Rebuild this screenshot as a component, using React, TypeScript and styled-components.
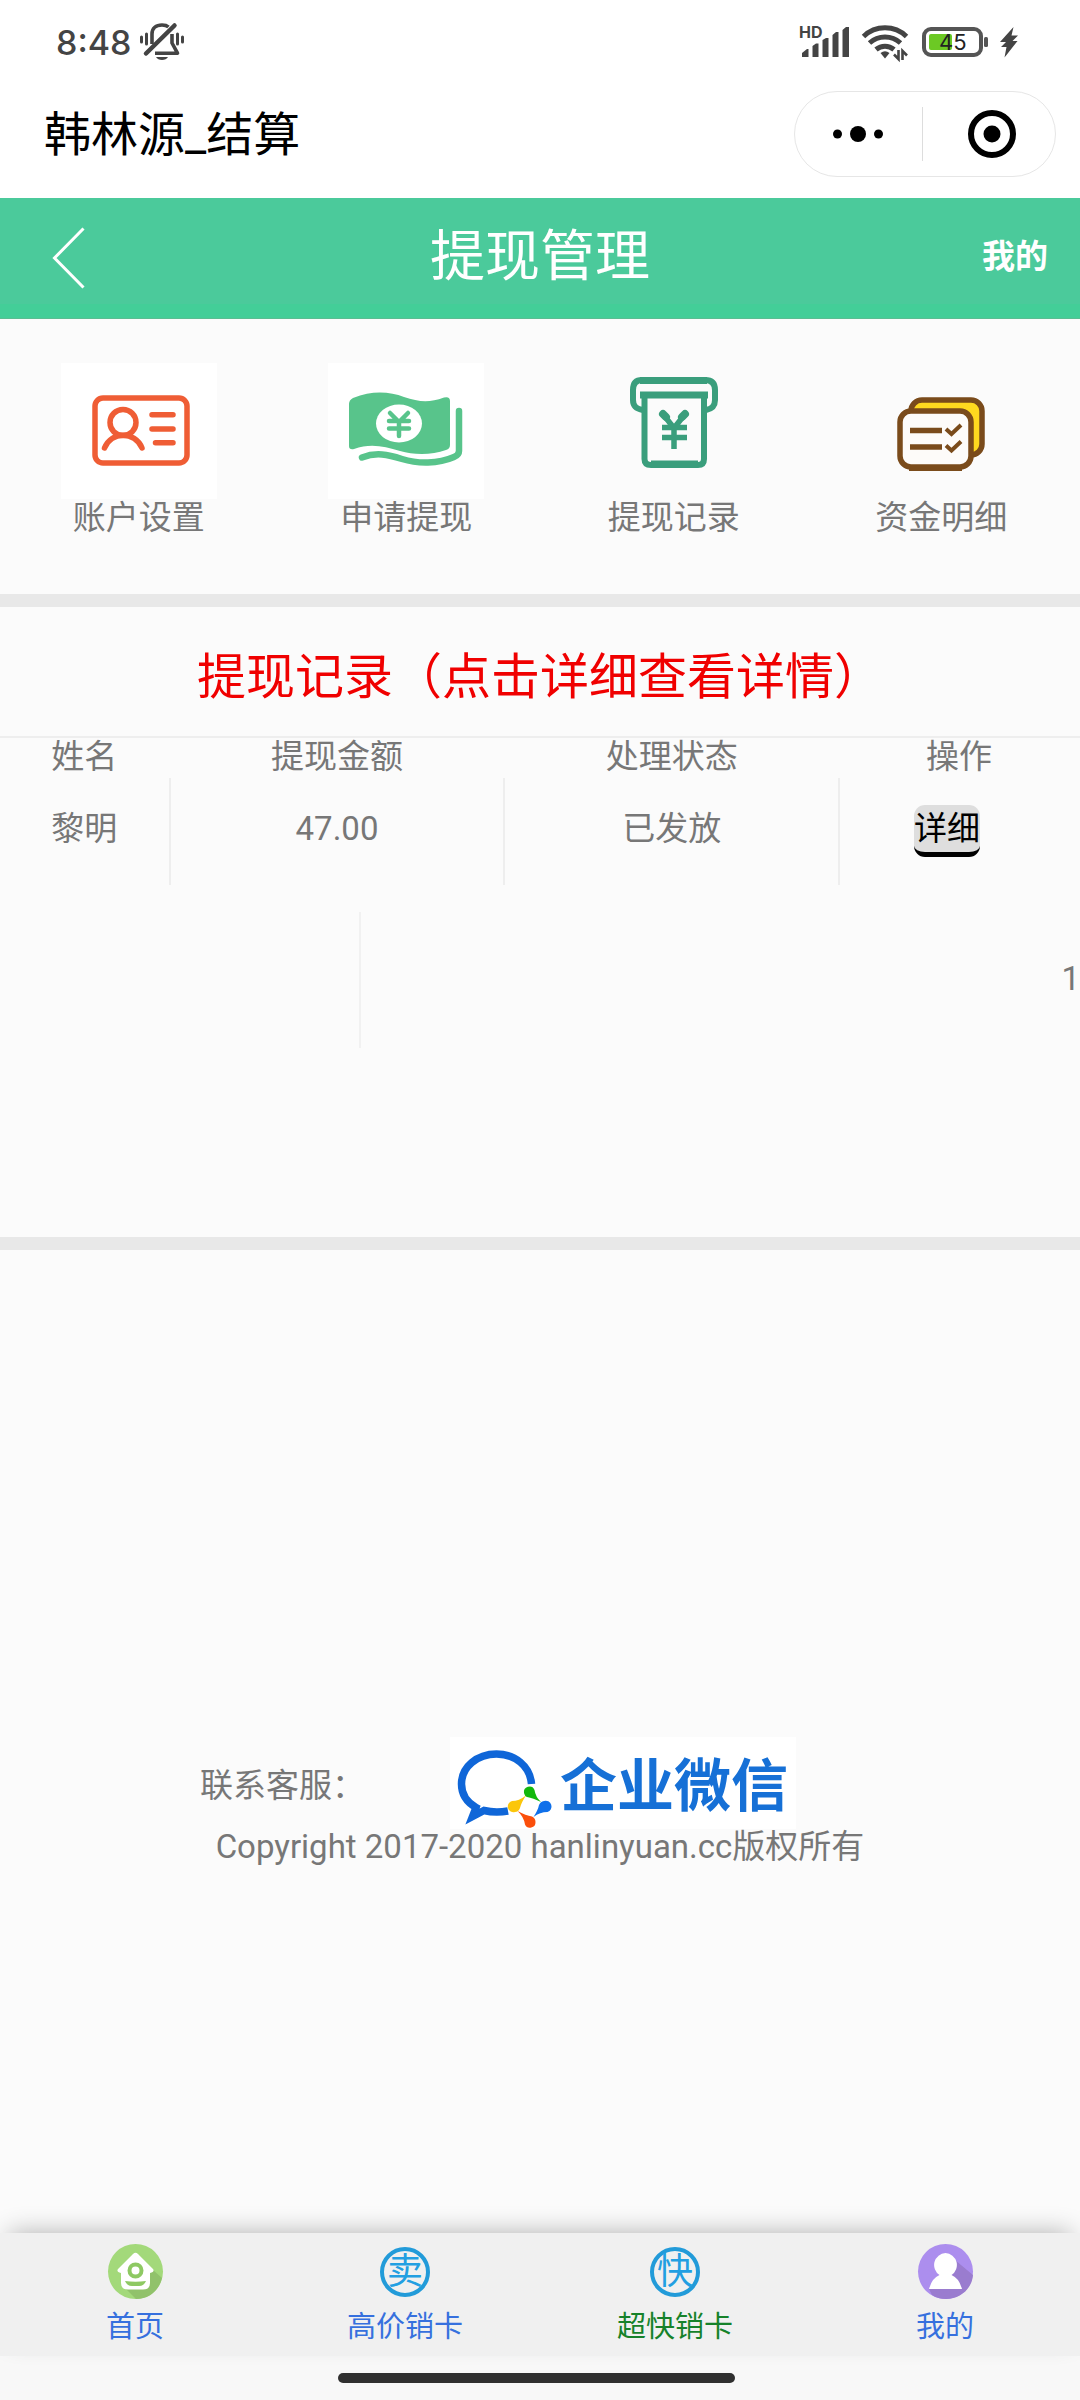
import React from "react";
import styled, { createGlobalStyle } from "styled-components";

const GlobalStyle = createGlobalStyle`
  *, *::before, *::after { box-sizing: border-box; }
  body {
    margin: 0;
    background: #fbfbfb;
    color: #777;
    font-family: Roboto, "Noto Sans CJK SC", sans-serif;
    font-size: 33px;
    line-height: 37px;
  }
  button { font: inherit; color: inherit; padding: 0; border: 0; background: none; cursor: pointer; }
  a { color: inherit; text-decoration: none; }
  svg { display: block; flex: none; overflow: visible; }
`;

const Page = styled.div`
  min-height: 100vh;
  display: flex;
  flex-direction: column;
`;

const StatusBar = styled.div`
  height: 84px;
  padding: 0 62px 0 56px;
  display: flex;
  align-items: center;
  justify-content: space-between;
  background: #fff;
  color: #444;
`;

const StatusGroup = styled.div<{ $gap: number }>`
  display: flex;
  align-items: center;
  gap: ${(p) => p.$gap}px;
`;

const Clock = styled.time`
  font-family: Inter, sans-serif;
  font-size: 34px;
  font-weight: 500;
`;

const TitleBar = styled.header`
  height: 114px;
  padding: 0 24px 14px 44px;
  display: flex;
  align-items: center;
  justify-content: space-between;
  background: #fff;
`;

const AppName = styled.div`
  padding-top: 2px;
  color: #000;
  font-size: 47px;
  line-height: 60px;
`;

const Capsule = styled.div`
  width: 262px;
  height: 86px;
  display: flex;
  align-items: center;
  border: 1px solid #e6e6e6;
  border-radius: 43px;
`;

const CapsuleButton = styled.button`
  flex: 1;
  height: 54px;
  display: flex;
  align-items: center;
  justify-content: center;

  & + & {
    padding-left: 6px;
    border-left: 1px solid #ddd;
  }
`;

const GreenBar = styled.div`
  height: 121px;
  padding: 0 32px;
  display: grid;
  grid-template-columns: 1fr auto 1fr;
  align-items: center;
  background: linear-gradient(#4bca9b 0 106px, #43ce98 106px);
  border-bottom: 1px solid #5bbd92;
  color: #fff;
`;

const BackButton = styled.button`
  justify-self: start;
  margin-left: 20px;
`;

const BarTitle = styled.h1`
  margin: 0;
  padding-bottom: 4px;
  font-size: 55px;
  font-weight: 400;
  line-height: 72px;
`;

const MineLink = styled.a`
  justify-self: end;
  padding-bottom: 4px;
  font-weight: 700;
`;

const Shortcuts = styled.nav`
  padding: 44px 5px 58px;
  display: grid;
  grid-template-columns: repeat(4, 1fr);
`;

const Shortcut = styled.a`
  display: flex;
  flex-direction: column;
  align-items: center;
`;

const Tile = styled.span<{ $filled: boolean }>`
  background: ${(p) => (p.$filled ? "#fff" : "transparent")};
`;

const Band = styled.div`
  height: 13px;
  background: #e8e8e8;
`;

const RecordsTitle = styled.h2`
  margin: 0;
  height: 131px;
  padding-top: 41px;
  border-bottom: 2px solid #eee;
  color: #f00000;
  font-size: 49px;
  font-weight: 400;
  line-height: 60px;
  text-align: center;
`;

const Records = styled.table`
  width: 100%;
  table-layout: fixed;
  border-collapse: separate;
  border-spacing: 0;
  text-align: center;
`;

const Column = styled.col<{ $width?: string }>`
  width: ${(p) => p.$width ?? "auto"};
`;

const HeadCell = styled.th`
  padding: 0 2px 3px 0;
  font-weight: 400;
`;

const Cell = styled.td`
  height: 107px;
  padding: 0 0 6px;
  border-right: 2px solid #eee;
`;

const ActionCell = styled.td`
  padding: 0 26px 2px 0;
`;

const DetailButton = styled.button`
  height: 52px;
  vertical-align: middle;
  border-bottom: 5px solid #000;
  border-radius: 11px;
  background: #dedede;
  color: #000;
  line-height: 47px;
`;

const Pager = styled.div`
  margin: 27px 0 189px;
  display: flex;
  align-items: center;
  justify-content: flex-end;
`;

const PagerSide = styled.div`
  flex: 0 0 361px;
  height: 136px;
  margin-right: auto;
  border-right: 2px solid #f1f1f1;
`;

const PageNumber = styled.span`
  padding-bottom: 3px;
`;

const Footer = styled.footer`
  flex: 1;
  padding: 487px 0 200px;
  text-align: center;
`;

const Contact = styled.div`
  height: 92px;
  padding-right: 84px;
  display: flex;
  align-items: center;
  justify-content: center;
  gap: 85px;
`;

const ContactLabel = styled.span`
  padding-top: 4px;
`;

const WorkLogo = styled.a`
  width: 346px;
  height: 92px;
  padding-left: 6px;
  display: flex;
  align-items: center;
  background: #fff;
  color: #1670d6;
`;

const WorkName = styled.span`
  padding-top: 7px;
  font-size: 57px;
  font-weight: 700;
  line-height: 80px;
`;

const Copyright = styled.p`
  margin: 0;
  line-height: 35px;
`;

const Dock = styled.div`
  position: sticky;
  bottom: 0;
  background: #f8f8f8;
`;

const Tabs = styled.nav`
  height: 123px;
  padding-top: 11px;
  display: grid;
  grid-template-columns: repeat(4, 1fr);
  background: #f0f0f0;
  box-shadow: 0 -9px 24px -9px rgba(0, 0, 0, 0.3);
`;

const Tab = styled.a<{ $color: string }>`
  display: flex;
  flex-direction: column;
  align-items: center;
  gap: 10px;
  color: ${(p) => p.$color};
  font-size: 29px;
`;

const TabIcon = styled.span`
  height: 55px;
  display: flex;
  align-items: center;
`;

const Coin = styled.span`
  width: 50px;
  height: 50px;
  display: flex;
  align-items: center;
  justify-content: center;
  border: 4px solid #229bd9;
  border-radius: 50%;
  color: #229fe2;
  font-size: 36px;
  line-height: 42px;
`;

const HomeIndicator = styled.div`
  height: 44px;
  padding: 17px 7px 0 0;

  &::after {
    content: "";
    display: block;
    width: 37%;
    height: 10px;
    margin: 0 auto;
    border-radius: 5px;
    background: #303030;
  }
`;

const BellOff = () => (
  <svg width="48" height="42" viewBox="0 0 48 42" fill="none" stroke="#444" strokeWidth="3.6">
    <path d="M14 23V13C14 7 18 4 24 4C27 4 29 4.600 30.500 6" />
    <path d="M36.500 4.500L8 32.500" strokeWidth="4.500" strokeLinecap="round" />
    <path d="M34 13V22L39.500 32.200H17" strokeLinejoin="round" />
    <path d="M18 36H30C28 40 20 40 18 36Z" fill="#444" stroke="none" />
    <path d="M3.500 16V21M8.500 13V23M39.500 13V23M44.500 16V21" strokeWidth="3" strokeLinecap="round" />
  </svg>
);

const Signal = () => (
  <svg width="50" height="34" viewBox="0 0 50 34" fill="#444">
    <text x="0" y="13" fontFamily="Inter, sans-serif" fontSize="16" fontWeight="700">HD</text>
    <path d="M3 32V28L8 24H9.500V32ZM13.500 32V21L17 18.500H19.500V32ZM23.500 32V15L27 13H29.500V32ZM33.500 32V10L37 7H39.500V32ZM43.500 32V5L47 2H50V32Z" />
  </svg>
);

const Wifi = () => (
  <svg width="48" height="38" viewBox="0 0 48 38" fill="none" stroke="#444" strokeWidth="5">
    <path d="M2.500 13.500A31 31 0 0 1 45.500 13.500" />
    <path d="M8.500 20A23 23 0 0 1 39.500 20" />
    <path d="M15 26.500A14 14 0 0 1 33 26.500" />
    <path d="M19.500 30Q24 26.500 28.500 30L24 35.500Z" fill="#444" stroke="none" />
    <path d="M37.500 27V36L33 31.500M41.500 37V28L46 32.500" strokeWidth="2.600" />
  </svg>
);

const Battery = () => (
  <svg width="67" height="32" viewBox="0 0 67 32">
    <rect x="3" y="3" width="57" height="26" rx="7" fill="#fff" stroke="#555" strokeWidth="4" />
    <rect x="8" y="8" width="23" height="16" rx="2" fill="#6cc924" />
    <rect x="63" y="11" width="4" height="10" rx="1.500" fill="#555" />
    <text x="18" y="24" fontFamily="Inter, sans-serif" fontSize="22" fontWeight="400" fill="#222">45</text>
  </svg>
);

const Bolt = () => (
  <svg width="18" height="31" viewBox="0 0 18 31" fill="#444">
    <path d="M13.500 0L0 15H6L1 20H6.500L4.500 30.500L17.500 14H12.500L18 8.500H11.500Z" />
  </svg>
);

const BackIcon = () => (
  <svg width="33" height="62" viewBox="0 0 33 62" fill="none" stroke="#fff" strokeWidth="3">
    <path d="M31.500 1.500L2.500 31L31.500 60.500" />
  </svg>
);

const AccountIcon = () => (
  <svg width="156" height="136" viewBox="0 0 156 136" fill="none" stroke="#ef5d35" strokeWidth="5.500" strokeLinecap="round">
    <rect x="34" y="35" width="92" height="65" rx="8" />
    <circle cx="62" cy="59.500" r="13" />
    <path d="M43.500 85C50 68 74 68 81 85M91 51.700H112M91 66H112M94.500 79.700H112" />
  </svg>
);

const CashIcon = () => (
  <svg width="156" height="136" viewBox="0 0 156 136" fill="none" strokeLinecap="round">
    <path
      d="M21 41Q21 37 25 35C45 27 62 29 76 34C91 39 101 40 116 34.500Q122 33 122 38V82Q122 86 118 87C104 92 86 92 72 88C56 83 42 80 26 86Q21 87 21 83Z"
      fill="#58c48b"
    />
    <ellipse cx="71" cy="60.500" rx="23" ry="19" fill="#fff" />
    <path d="M62 50L71 59L80 50M61 58H81M61 65.500H81M71 59V73" stroke="#58c48b" strokeWidth="4.500" />
    <path d="M131 48V88Q131 92 126 94C110 101 90 101 74 96C60 91.500 48 89 34 94.500" stroke="#58c48b" strokeWidth="6.500" />
  </svg>
);

const RecordIcon = () => (
  <svg width="156" height="136" viewBox="0 0 156 136" fill="none" stroke="#3a9e7c" strokeWidth="6">
    <path d="M47 47C41 46 37 44 37 37V27Q37 17 46 17H109Q119 17 119 27V37C119 44 115 46 110 47" />
    <path d="M48.500 32V96Q48.500 102 55 102H102Q108 102 108 96V32" />
    <path d="M44 32H112M55 101H102M44 17.500H111" strokeWidth="7" />
    <path d="M66 50L78 65L90 50M66 64.500H91M66 74.500H91M78 64V86" strokeWidth="5.500" />
    <path d="M67 51L70 54M89 51L86 54" strokeWidth="8" strokeLinecap="round" />
  </svg>
);

const FundsIcon = () => (
  <svg width="156" height="136" viewBox="0 0 156 136" fill="none" stroke="#7a4b1b" strokeWidth="5.500">
    <rect x="48" y="37" width="71" height="55" rx="11" fill="#ffd91f" />
    <rect x="37" y="48" width="71" height="56" rx="11" fill="#fdfbf9" />
    <path d="M46 105H99" strokeWidth="6" />
    <path d="M47 67.500H79M47 84H79" />
    <path d="M83 66L88.500 71L98 62M83 82.500L88.500 87.500L98 78.500" strokeWidth="4" />
  </svg>
);

const HomeIcon = () => (
  <svg width="55" height="55" viewBox="0 0 55 55">
    <circle cx="27.500" cy="27.500" r="27.500" fill="#a3d97a" />
    <path d="M45 26L54 34C51 46 42 55 28 55L17 44Z" fill="#91c26b" />
    <path d="M25 10Q27.500 7.500 30 10L45 25Q47 28 42 29V39Q42 45.500 35 45.500H20Q13 45.500 13 39V29Q8 28 10 25Z" fill="#fff" />
    <circle cx="27.500" cy="26.500" r="6" fill="none" stroke="#8ec963" strokeWidth="4" />
    <path d="M17 37Q27.500 38.500 38 37Q36 42 31 42H24Q19 42 17 37Z" fill="#8ec963" />
  </svg>
);

const PersonIcon = () => (
  <svg width="55" height="55" viewBox="0 0 55 55">
    <circle cx="27.500" cy="27.500" r="27.500" fill="#ac8eee" />
    <path d="M37 16L55 31C54 45 42 55 28 55Q20 55 14 51L11 45L34 32Z" fill="#9a7ccf" />
    <path d="M27.500 9A12 12 0 0 1 33.500 31Q41 34 44 45H11Q14 34 21.500 31A12 12 0 0 1 27.500 9Z" fill="#fff" />
  </svg>
);

const WorkBubble = () => (
  <svg width="104" height="92" viewBox="0 0 104 92">
    <path
      d="M75.500 47C74 29 59 17 40.500 17C21 17 5.500 30 5.500 47C5.500 57 10.500 65 20 70.500L16.500 79.500L28 73.500C36 75.500 44 75.500 52 74"
      fill="none"
      stroke="#0f66d8"
      strokeWidth="7.500"
    />
    <path d="M68 56A5.500 5.500 0 0 1 78.500 53Q79.500 60 85 65Q77 61 71 60Q68.500 59 68 56Z" fill="#12b80c" />
    <path d="M88 64A5.500 5.500 0 0 1 91.500 75Q84 75 77.500 80Q82 73 83 68Q84.500 64.500 88 64Z" fill="#0f70ea" />
    <path d="M79.500 85A5.500 5.500 0 0 1 69 87.500Q68 80 61.500 74Q70 78.500 76 79.500Q79.500 81 79.500 85Z" fill="#fb4f0b" />
    <path d="M59 75A5.500 5.500 0 0 1 56 64Q63 64 70 58.500Q65 66 64 71Q62.500 75 59 75Z" fill="#fbc60b" />
  </svg>
);

const shortcuts = [
  { label: "账户设置", icon: <AccountIcon />, filled: true },
  { label: "申请提现", icon: <CashIcon />, filled: true },
  { label: "提现记录", icon: <RecordIcon />, filled: false },
  { label: "资金明细", icon: <FundsIcon />, filled: false },
];

const records = [{ name: "黎明", amount: "47.00", status: "已发放" }];

const tabs = [
  { label: "首页", color: "#3670de", icon: <HomeIcon /> },
  { label: "高价销卡", color: "#3670de", icon: <Coin>卖</Coin> },
  { label: "超快销卡", color: "#16822a", icon: <Coin>快</Coin> },
  { label: "我的", color: "#3670de", icon: <PersonIcon /> },
];

export default function App() {
  return (
    <Page lang="zh-CN">
      <GlobalStyle />
      <StatusBar>
        <StatusGroup $gap={7}>
          <Clock>8:48</Clock>
          <BellOff />
        </StatusGroup>
        <StatusGroup $gap={12}>
          <Signal />
          <Wifi />
          <Battery />
          <Bolt />
        </StatusGroup>
      </StatusBar>

      <TitleBar>
        <AppName>韩林源_结算</AppName>
        <Capsule>
          <CapsuleButton aria-label="更多">
            <svg width="50" height="18" viewBox="0 0 50 18">
              <circle cx="4.500" cy="9" r="4.500" />
              <circle cx="25" cy="9" r="8" />
              <circle cx="45.500" cy="9" r="4.500" />
            </svg>
          </CapsuleButton>
          <CapsuleButton aria-label="关闭">
            <svg width="48" height="48" viewBox="0 0 48 48">
              <circle cx="24" cy="24" r="21" fill="none" stroke="#000" strokeWidth="6" />
              <circle cx="24" cy="24" r="8.500" />
            </svg>
          </CapsuleButton>
        </Capsule>
      </TitleBar>

      <GreenBar>
        <BackButton aria-label="返回">
          <BackIcon />
        </BackButton>
        <BarTitle>提现管理</BarTitle>
        <MineLink href="#mine">我的</MineLink>
      </GreenBar>

      <Shortcuts>
        {shortcuts.map((item) => (
          <Shortcut key={item.label} href="#shortcut">
            <Tile $filled={item.filled}>{item.icon}</Tile>
            {item.label}
          </Shortcut>
        ))}
      </Shortcuts>

      <Band />
      <RecordsTitle>提现记录（点击详细查看详情）</RecordsTitle>
      <Records>
        <colgroup>
          <Column $width="15.8%" />
          <Column $width="31%" />
          <Column $width="31%" />
          <Column />
        </colgroup>
        <thead>
          <tr>
            <HeadCell>姓名</HeadCell>
            <HeadCell>提现金额</HeadCell>
            <HeadCell>处理状态</HeadCell>
            <HeadCell>操作</HeadCell>
          </tr>
        </thead>
        <tbody>
          {records.map((row) => (
            <tr key={row.name}>
              <Cell>{row.name}</Cell>
              <Cell>{row.amount}</Cell>
              <Cell>{row.status}</Cell>
              <ActionCell>
                <DetailButton>详细</DetailButton>
              </ActionCell>
            </tr>
          ))}
        </tbody>
      </Records>
      <Pager>
        <PagerSide />
        <PageNumber>1</PageNumber>
      </Pager>
      <Band />

      <Footer>
        <Contact>
          <ContactLabel>联系客服：</ContactLabel>
          <WorkLogo href="#contact">
            <WorkBubble />
            <WorkName>企业微信</WorkName>
          </WorkLogo>
        </Contact>
        <Copyright>Copyright 2017-2020 hanlinyuan.cc版权所有</Copyright>
      </Footer>

      <Dock>
        <Tabs>
          {tabs.map((tab) => (
            <Tab key={tab.label} href="#tab" $color={tab.color}>
              <TabIcon>{tab.icon}</TabIcon>
              {tab.label}
            </Tab>
          ))}
        </Tabs>
        <HomeIndicator />
      </Dock>
    </Page>
  );
}
